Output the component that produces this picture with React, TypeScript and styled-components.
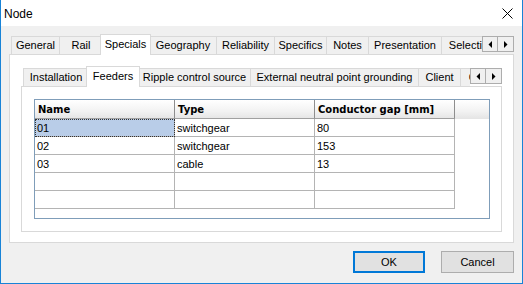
import React from 'react';
import styled, {createGlobalStyle} from "styled-components";

const GlobalStyle = createGlobalStyle`
    html, body {
        margin: 0;
        padding: 0;
        background: #fff;
    }
    * {
        box-sizing: border-box;
    }
`

type Tab = { label: string, w: number, active?: boolean }

const outerTabs: Tab[] = [
    {label: 'General', w: 48},
    {label: 'Rail', w: 43},
    {label: 'Specials', w: 47, active: true},
    {label: 'Geography', w: 67},
    {label: 'Reliability', w: 58},
    {label: 'Specifics', w: 52},
    {label: 'Notes', w: 42},
    {label: 'Presentation', w: 73},
    {label: 'Selection', w: 60},
]

const innerTabs: Tab[] = [
    {label: 'Installation', w: 65},
    {label: 'Feeders', w: 50, active: true},
    {label: 'Ripple control source', w: 112},
    {label: 'External neutral point grounding', w: 168},
    {label: 'Client', w: 42},
    {label: 'Coupling', w: 60},
]

const feeders = [
    {name: '01', type: 'switchgear', gap: '80'},
    {name: '02', type: 'switchgear', gap: '153'},
    {name: '03', type: 'cable', gap: '13'},
    {name: '', type: '', gap: ''},
    {name: '', type: '', gap: ''},
]

const Arrow = ({dir}: { dir: 'left' | 'right' }) => (
    <svg width="4" height="7" viewBox="0 0 4 7">
        {dir === 'left'
            ? <path d="M4 0 L4 7 L0.5 3.5 Z" fill="#000"/>
            : <path d="M0 0 L0 7 L3.5 3.5 Z" fill="#000"/>}
    </svg>
)

const TabRow = ({tabs}: { tabs: Tab[] }) => (
    <TabStrip>
        <TabsViewport>
            {tabs.map(t => (
                <TabItem key={t.label} $w={t.w} $active={t.active}>{t.label}</TabItem>
            ))}
        </TabsViewport>
        <ScrollButtons>
            <ScrollBtn><Arrow dir="left"/></ScrollBtn>
            <ScrollBtn><Arrow dir="right"/></ScrollBtn>
        </ScrollButtons>
    </TabStrip>
)

export default function App() {
    return (
        <>
            <GlobalStyle/>
            <Window>
                <TitleBar>
                    <Title>Node</Title>
                    <svg width="11" height="11" viewBox="0 0 11 11">
                        <path d="M0.5 0.5 L10.5 10.5 M10.5 0.5 L0.5 10.5" stroke="#000" strokeWidth="1"/>
                    </svg>
                </TitleBar>
                <Body>
                    <TabRow tabs={outerTabs}/>
                    <OuterPanel>
                        <TabRow tabs={innerTabs}/>
                        <InnerPanel>
                            <Grid>
                                <HeaderRow>
                                    <HeadCell>Name</HeadCell>
                                    <HeadCell>Type</HeadCell>
                                    <HeadCell>Conductor gap [mm]</HeadCell>
                                </HeaderRow>
                                {feeders.map((f, i) => (
                                    <Row key={i}>
                                        <Cell $selected={i === 0}>{f.name}</Cell>
                                        <Cell>{f.type}</Cell>
                                        <Cell>{f.gap}</Cell>
                                    </Row>
                                ))}
                            </Grid>
                        </InnerPanel>
                    </OuterPanel>
                    <Buttons>
                        <Button $w={72} $default>OK</Button>
                        <Button $w={73}>Cancel</Button>
                    </Buttons>
                </Body>
            </Window>
        </>
    );
}

const Window = styled.div`
    width: 523px;
    height: 284px;
    border: 1px solid #1883d7;
    border-top: none;
    display: flex;
    flex-direction: column;
    background: #f0f0f0;
    font-family: 'Liberation Sans', Arial, sans-serif;
    font-size: 11px;
    color: #000;
`

const TitleBar = styled.div`
    height: 26px;
    flex: none;
    background: #fff;
    display: flex;
    align-items: center;
    justify-content: space-between;
    padding: 0 9px 0 3px;
`

const Title = styled.span`
    font-size: 12px;
    margin-top: 1px;
`

const Body = styled.div`
    flex: 1;
    display: flex;
    flex-direction: column;
    padding: 8px 8px 10px 8px;
`

const TabStrip = styled.div`
    display: flex;
    height: 21px;
    margin-bottom: -1px;
    flex: none;
`

const TabsViewport = styled.div`
    flex: 1;
    display: flex;
    align-items: flex-start;
    overflow: hidden;
    padding-left: 2px;
`

const TabItem = styled.div<{ $w: number, $active?: boolean }>`
    flex: none;
    width: ${p => p.$active ? p.$w + 4 : p.$w}px;
    height: ${p => p.$active ? 21 : 18}px;
    margin: ${p => p.$active ? '0 -2px' : '2px 0 0'};
    padding-bottom: ${p => p.$active ? 3 : 1}px;
    display: flex;
    align-items: center;
    justify-content: center;
    white-space: nowrap;
    background: ${p => p.$active ? '#fff' : '#f0f0f0'};
    border-top: 1px solid #d9d9d9;
    border-left: 1px solid #d9d9d9;
    border-right: ${p => p.$active ? '1px solid #d9d9d9' : 'none'};
    position: relative;
    z-index: ${p => p.$active ? 1 : 0};
`

const ScrollButtons = styled.div`
    display: flex;
    margin-top: 2px;
    height: 16px;
    flex: none;
`

const ScrollBtn = styled.div`
    width: 16px;
    height: 16px;
    display: flex;
    align-items: center;
    justify-content: center;
    background: #f0f0f0;
    border: 1px solid #adadad;
    & + & {
        border-left: none;
    }
`

const OuterPanel = styled.div`
    height: 189px;
    flex: none;
    background: #fff;
    border: 1px solid #d9d9d9;
    padding: 11px 11px 10px 11px;
    display: flex;
    flex-direction: column;
`

const InnerPanel = styled.div`
    flex: 1;
    background: #fff;
    border: 1px solid #d9d9d9;
    padding: 12px 11px 12px 12px;
    display: flex;
`

const Grid = styled.div`
    flex: 1;
    border: 1px solid #7f9db9;
    display: flex;
    flex-direction: column;
`

const HeaderRow = styled.div`
    display: grid;
    grid-template-columns: repeat(3, 140px);
    height: 19px;
    background: linear-gradient(#ffffff, #f2f2f2 60%, #e4e4e4);
`

const HeadCell = styled.div`
    font-family: 'DejaVu Sans', Verdana, sans-serif;
    font-weight: bold;
    font-size: 10px;
    padding: 1px 0 0 3px;
    display: flex;
    align-items: center;
    border-right: 1px solid #8e8e8e;
    border-bottom: 1px solid #a0a0a0;
`

const Row = styled.div`
    display: grid;
    grid-template-columns: repeat(3, 140px);
    height: 18px;
`

const Cell = styled.div<{ $selected?: boolean }>`
    padding: 1px 0 0 2px;
    display: flex;
    align-items: center;
    border-right: 1px solid #b4b4b4;
    border-bottom: 1px solid #b4b4b4;
    background: ${p => p.$selected ? '#b9cde8' : '#fff'};
    outline: ${p => p.$selected ? '1px dotted #333' : 'none'};
    outline-offset: -1px;
`

const Buttons = styled.div`
    display: flex;
    justify-content: flex-end;
    gap: 16px;
    margin-top: 8px;
`

const Button = styled.div<{ $w: number, $default?: boolean }>`
    width: ${p => p.$w}px;
    height: 22px;
    display: flex;
    align-items: center;
    justify-content: center;
    background: #e1e1e1;
    border: ${p => p.$default ? '2px solid #0078d7' : '1px solid #adadad'};
`
